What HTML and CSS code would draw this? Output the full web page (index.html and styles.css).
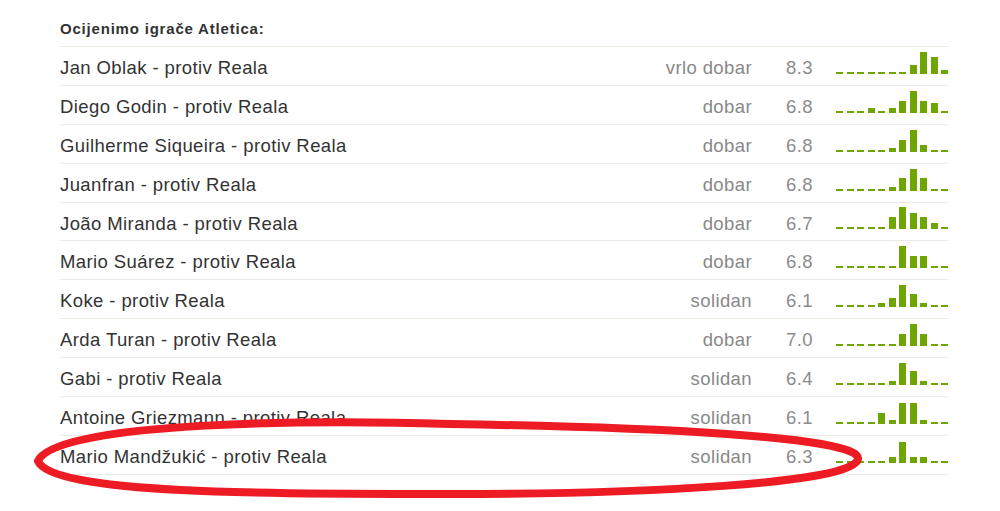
FILE: index.html
```html
<!DOCTYPE html>
<html lang="hr">
<head>
  <meta charset="UTF-8">
  <title>Ocjene igrača</title>
  <link rel="stylesheet" href="styles.css">
</head>
<body>

<div class="ratings">
  <div class="ratings-title">Ocijenimo igrače Atletica:</div>

  <div class="player-row">
    <span class="player-name">Jan Oblak - protiv Reala</span>
    <span class="grade">vrlo dobar</span>
    <span class="score">8.3</span>
    <div class="histogram">
      <i></i><i></i><i></i><i></i><i></i><i></i><i></i>
      <i style="height: 9px"></i><i style="height: 22px"></i><i style="height: 17px"></i><i style="height: 4px"></i>
    </div>
  </div>

  <div class="player-row">
    <span class="player-name">Diego Godin - protiv Reala</span>
    <span class="grade">dobar</span>
    <span class="score">6.8</span>
    <div class="histogram">
      <i></i><i></i><i></i><i style="height: 5px"></i><i></i><i style="height: 5px"></i>
      <i style="height: 12px"></i><i style="height: 22px"></i><i style="height: 12px"></i><i style="height: 10px"></i><i></i>
    </div>
  </div>

  <div class="player-row">
    <span class="player-name">Guilherme Siqueira - protiv Reala</span>
    <span class="grade">dobar</span>
    <span class="score">6.8</span>
    <div class="histogram">
      <i></i><i></i><i></i><i></i><i></i><i style="height: 4px"></i>
      <i style="height: 12px"></i><i style="height: 22px"></i><i style="height: 7px"></i><i></i><i></i>
    </div>
  </div>

  <div class="player-row">
    <span class="player-name">Juanfran - protiv Reala</span>
    <span class="grade">dobar</span>
    <span class="score">6.8</span>
    <div class="histogram">
      <i></i><i></i><i></i><i></i><i></i><i style="height: 4px"></i>
      <i style="height: 13px"></i><i style="height: 22px"></i><i style="height: 13px"></i><i></i><i></i>
    </div>
  </div>

  <div class="player-row">
    <span class="player-name">João Miranda - protiv Reala</span>
    <span class="grade">dobar</span>
    <span class="score">6.7</span>
    <div class="histogram">
      <i></i><i></i><i></i><i></i><i></i><i style="height: 12px"></i>
      <i style="height: 22px"></i><i style="height: 16px"></i><i style="height: 12px"></i><i style="height: 6px"></i><i></i>
    </div>
  </div>

  <div class="player-row">
    <span class="player-name">Mario Suárez - protiv Reala</span>
    <span class="grade">dobar</span>
    <span class="score">6.8</span>
    <div class="histogram">
      <i></i><i></i><i></i><i></i><i></i><i></i>
      <i style="height: 22px"></i><i style="height: 12px"></i><i style="height: 12px"></i><i></i><i></i>
    </div>
  </div>

  <div class="player-row">
    <span class="player-name">Koke - protiv Reala</span>
    <span class="grade">solidan</span>
    <span class="score">6.1</span>
    <div class="histogram">
      <i></i><i></i><i></i><i></i><i style="height: 4px"></i><i style="height: 9px"></i>
      <i style="height: 22px"></i><i style="height: 13px"></i><i style="height: 4px"></i><i></i><i></i>
    </div>
  </div>

  <div class="player-row">
    <span class="player-name">Arda Turan - protiv Reala</span>
    <span class="grade">dobar</span>
    <span class="score">7.0</span>
    <div class="histogram">
      <i></i><i></i><i></i><i></i><i></i><i></i>
      <i style="height: 12px"></i><i style="height: 22px"></i><i style="height: 12px"></i><i></i><i></i>
    </div>
  </div>

  <div class="player-row">
    <span class="player-name">Gabi - protiv Reala</span>
    <span class="grade">solidan</span>
    <span class="score">6.4</span>
    <div class="histogram">
      <i></i><i></i><i></i><i></i><i></i><i style="height: 4px"></i>
      <i style="height: 22px"></i><i style="height: 14px"></i><i style="height: 4px"></i><i></i><i></i>
    </div>
  </div>

  <div class="player-row">
    <span class="player-name">Antoine Griezmann - protiv Reala</span>
    <span class="grade">solidan</span>
    <span class="score">6.1</span>
    <div class="histogram">
      <i></i><i></i><i></i><i></i><i style="height: 11px"></i><i style="height: 4px"></i>
      <i style="height: 21px"></i><i style="height: 21px"></i><i style="height: 4px"></i><i></i><i></i>
    </div>
  </div>

  <div class="player-row">
    <span class="player-name">Mario Mandžukić - protiv Reala</span>
    <span class="grade">solidan</span>
    <span class="score">6.3</span>
    <div class="histogram">
      <i></i><i></i><i></i><i></i><i></i><i style="height: 6px"></i>
      <i style="height: 21px"></i><i style="height: 6px"></i><i style="height: 6px"></i><i></i><i></i>
    </div>
  </div>
</div>

<!-- hand-drawn highlight -->
<svg class="highlight" width="1000" height="511" viewBox="0 0 1000 511">
  <path d="M 38 461 C 56 420, 330 420, 450 424 C 640 427, 862 436, 858 459 C 854 484, 640 494, 450 494 C 300 494, 52 496, 38 461 Z"
        fill="none" stroke="#ed1c24" stroke-width="8"/>
</svg>

</body>
</html>
```

FILE: styles.css
```css
/* Global Styles */
body {
  margin: 0;
  background-color: #ffffff;
  font-family: 'Liberation Sans', Arial, sans-serif;
  color: #333;
}

.ratings {
  width: 888px;
  margin-left: 60px;
}

.ratings-title {
  padding-top: 20px;
  height: 26px;
  font-size: 15px;
  font-weight: bold;
  letter-spacing: 0.8px;
  color: #333;
  border-bottom: 1px solid #eae9e2;
}

.player-row {
  display: flex;
  align-items: stretch;
  box-sizing: border-box;
  height: 38.9px;
  border-bottom: 1px solid #eae9e2;
  font-size: 18.5px;
  letter-spacing: 0.4px;
}

.player-name {
  flex: 1;
  padding-top: 10px;
  color: #333;
}

.grade {
  padding-top: 10px;
  padding-right: 34px;
  color: #888;
  text-align: right;
}

.score {
  width: 50px;
  padding-top: 10px;
  color: #8c8c8c;
}

/* rating distribution, one slot per grade 0-10 */
.histogram {
  width: 112px;
  display: flex;
  align-items: flex-end;
  gap: 3.5px;
  padding-bottom: 11px;
}

.histogram i {
  display: block;
  width: 7px;
  height: 2px;
  background-color: #6ea500;
}

.highlight {
  position: absolute;
  top: 0;
  left: 0;
  pointer-events: none;
}
```
